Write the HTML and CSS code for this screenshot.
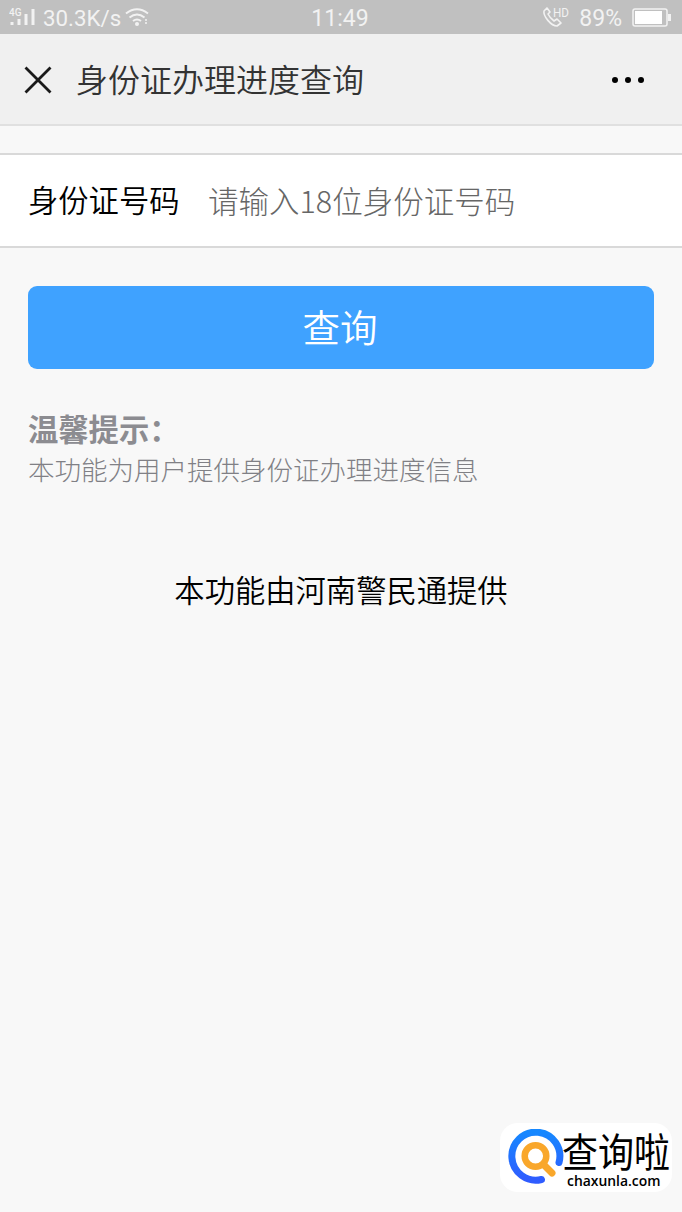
FILE: index.html
```
<!DOCTYPE html>
<html lang="zh-CN">
<head>
    <meta charset="UTF-8">
    <meta name="viewport" content="width=device-width, initial-scale=1.0">
    <title>身份证办理进度查询</title>
    <link rel="stylesheet" href="styles.css">
</head>
<body>
    <div class="status-bar">
        <div class="status-left">
            <svg class="signal" width="28" height="20" viewBox="0 0 28 20">
                <text x="0" y="9" font-size="10" font-weight="500">4G</text>
                <path d="M3 15v3M10 12v6M17 7v11M24 2v16" stroke="currentColor" stroke-width="3"/>
            </svg>
            <span class="speed">30.3K/s</span>
            <svg class="wifi" width="24" height="20" viewBox="0 0 24 20" fill="none" stroke="currentColor" stroke-width="2">
                <path d="M1 6.500q11-8.500 22 0M4.500 10.500q7.500-6 15 0M8 14q4-3 8 0"/>
                <circle cx="12" cy="17" r="2" fill="currentColor" stroke="none"/>
                <path d="M21 12v5" stroke-width="1.500" stroke-dasharray="2 1"/>
            </svg>
        </div>
        <span class="time">11:49</span>
        <div class="status-right">
            <svg class="call" width="28" height="24" viewBox="0 -1 28 24">
                <path d="M5 2L2 5C1 10 9 20 15 20L19 17L15 13L12 15Q8 12 6 8L8 6Z" fill="none" stroke="currentColor" stroke-width="1.600" stroke-linejoin="round"/>
                <text x="11" y="11" font-size="13" textLength="16" lengthAdjust="spacingAndGlyphs">HD</text>
            </svg>
            <span class="percent">89%</span>
            <svg class="battery" width="39" height="19" viewBox="0 0 39 19">
                <rect x="1" y="1" width="34" height="17" rx="2" fill="none" stroke="currentColor" stroke-width="1.500"/>
                <path d="M3 3h27v13H3z" fill="#fff"/>
                <path d="M36 6h3v7h-3z" fill="currentColor"/>
            </svg>
        </div>
    </div>

    <header class="nav">
        <svg class="close" width="28" height="28" viewBox="0 0 28 28">
            <path d="M1.500 1.500L26.500 26.500M26.500 1.500L1.500 26.500" stroke="#1a1a1a" stroke-width="2.800"/>
        </svg>
        <h1>身份证办理进度查询</h1>
        <svg class="more" width="34" height="8" viewBox="0 0 34 8">
            <circle cx="4" cy="4" r="3"/>
            <circle cx="17" cy="4" r="3"/>
            <circle cx="30" cy="4" r="3"/>
        </svg>
    </header>

    <main>
        <form>
            <div class="form-group">
                <label for="idNumber">身份证号码</label>
                <input type="text" id="idNumber" name="idNumber" placeholder="请输入18位身份证号码">
            </div>
            <button type="submit">查询</button>
        </form>
        <div class="tips">
            <h2>温馨提示：</h2>
            <p>本功能为用户提供身份证办理进度信息</p>
        </div>
        <p class="provider">本功能由河南警民通提供</p>
    </main>

    <div class="watermark">
        <svg class="logo" width="56" height="56" viewBox="0 0 56 56" fill="none" stroke-linecap="round">
            <defs>
                <linearGradient id="blue" x1="0" y1="0" x2="0" y2="1">
                    <stop offset="0" stop-color="#1688ff"/>
                    <stop offset="1" stop-color="#2f5cff"/>
                </linearGradient>
            </defs>
            <path d="M51 33.500A24 24 0 1 0 33.500 50.500" stroke="url(#blue)" stroke-width="7"/>
            <circle cx="27.500" cy="27" r="10.800" stroke="#f9a72b" stroke-width="6.500"/>
            <path d="M36.500 36.500L44 44" stroke="#f9a72b" stroke-width="7"/>
        </svg>
        <div class="brand">
            <span class="brand-name">查询啦</span>
            <span class="brand-url">chaxunla.com</span>
        </div>
    </div>
</body>
</html>
```
FILE: styles.css
```
* {
    box-sizing: border-box;
}
body {
    position: relative;
    margin: 0;
    min-height: 100vh;
    background-color: #f8f8f8;
    font-family: "Noto Sans CJK SC", sans-serif;
    font-weight: 350;
}
h1, h2, p {
    margin: 0;
}
svg {
    display: block;
    flex: none;
}
.status-bar {
    display: grid;
    grid-template-columns: 1fr auto 1fr;
    align-items: center;
    height: 34px;
    padding: 0 11px 0 9px;
    background-color: #c0c0c0;
    color: #f2f2f2;
    font-family: Roboto, sans-serif;
    font-size: 23px;
    font-weight: 400;
    line-height: 34px;
}
.status-bar text {
    fill: currentColor;
}
.status-left, .status-right {
    display: flex;
    align-items: center;
}
.status-right {
    justify-content: flex-end;
}
.status-bar span {
    padding-top: 3px;
    line-height: 31px;
}
.status-bar .speed {
    width: 78px;
    margin-left: 6px;
    font-size: 22.300px;
    white-space: nowrap;
}
.wifi {
    margin-left: 4px;
}
.percent {
    margin: 0 10px 0 9px;
}
.nav {
    display: flex;
    align-items: center;
    height: 92px;
    padding: 2px 37px 0 24px;
    background-color: #f0f0f0;
    border-bottom: 2px solid #e0e0e0;
}
.nav h1 {
    flex: 1;
    margin-left: 24px;
    padding-bottom: 4px;
    color: #333;
    font-size: 32px;
    font-weight: 350;
    line-height: 44px;
}
.form-group {
    display: flex;
    align-items: center;
    height: 95px;
    margin-top: 27px;
    padding: 0 28px;
    background-color: #fff;
    border-top: 2px solid #d9d9d9;
    border-bottom: 2px solid #d9d9d9;
}
label {
    width: 180px;
    padding-bottom: 4px;
    color: #000;
    font-size: 30.300px;
}
input {
    flex: 1;
    min-width: 0;
    padding: 0 0 1px;
    border: 0;
    outline: none;
    background: none;
    font-family: inherit;
    font-weight: 300;
    font-size: 30.500px;
}
input::placeholder {
    color: #666;
}
button {
    display: block;
    width: 626px;
    height: 83px;
    margin: 38px auto 0;
    padding: 0 2px 4px 0;
    border: 0;
    border-radius: 9px;
    background-color: #3fa2ff;
    color: #fff;
    font-family: inherit;
    font-weight: 350;
    font-size: 37.500px;
}
.tips {
    margin: 38px 28px 0;
    color: #8c8c91;
}
.tips h2 {
    font-size: 30.300px;
    font-weight: 700;
    line-height: 43px;
}
.tips p {
    color: #808085;
    font-size: 26.500px;
    font-weight: 300;
    line-height: 38px;
}
.provider {
    margin-top: 79px;
    color: #000;
    font-size: 30.300px;
    line-height: 44px;
    text-align: center;
}
.watermark {
    position: absolute;
    right: 10px;
    bottom: 20px;
    display: flex;
    align-items: flex-start;
    width: 172px;
    height: 69px;
    padding: 6px 0 0 8px;
    border-radius: 18px;
    background-color: #fff;
    color: #000;
}
.brand {
    display: flex;
    flex-direction: column;
    margin-left: -2px;
}
.brand-name {
    font-size: 36px;
    font-weight: 400;
    line-height: 40px;
    transform: scaleY(1.100);
}
.brand-url {
    margin: 4px 0 0 5px;
    font-family: "Open Sans", sans-serif;
    font-size: 13.900px;
    font-weight: 600;
    line-height: 16px;
}
```
